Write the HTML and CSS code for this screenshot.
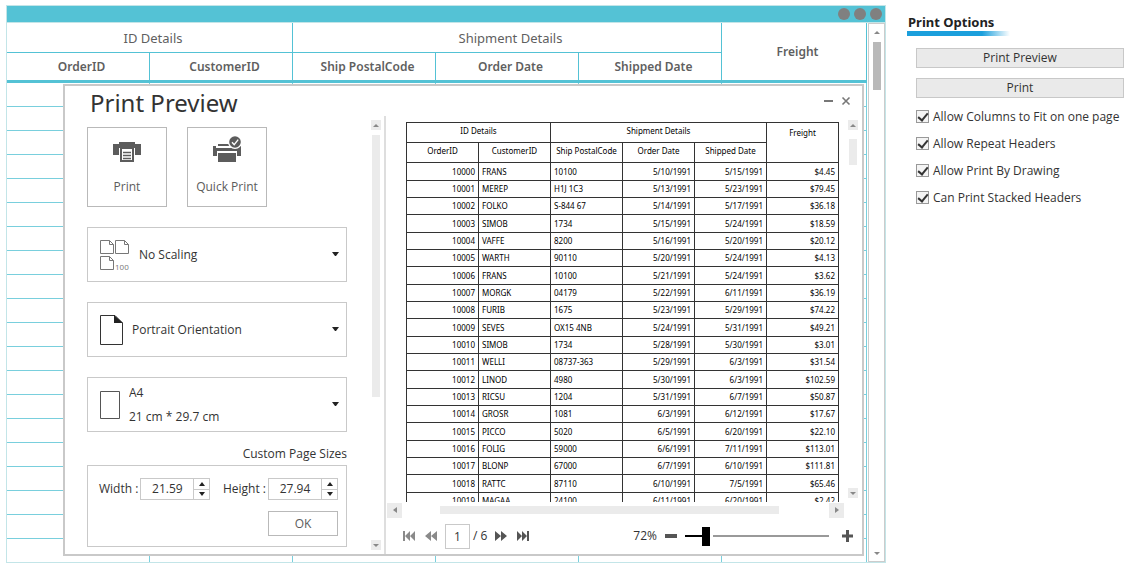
FILE: index.html
```html
<!DOCTYPE html>
<html lang="en">
<head>
<meta charset="utf-8">
<title>Print Preview</title>
<link rel="stylesheet" href="styles.css">
</head>
<body>
<div class="page">
  <main class="window">
    <div class="titlebar"><i class="dot"></i><i class="dot"></i><i class="dot"></i></div>
    <div class="window-body">
      <table class="grid">
        <colgroup><col span="5"><col class="col-freight"></colgroup>
        <thead>
          <tr><th colspan="2" class="stacked">ID Details</th><th colspan="3" class="stacked">Shipment Details</th><th rowspan="2">Freight</th></tr>
          <tr><th>OrderID</th><th>CustomerID</th><th>Ship PostalCode</th><th>Order Date</th><th>Shipped Date</th></tr>
        </thead>
        <tbody id="grid-rows"></tbody>
      </table>
      <div class="scroll scroll-main">
        <button class="scroll-btn" aria-label="Scroll up"><svg width="6" height="3" viewBox="0 0 6 3"><path d="M0 3L3 0L6 3Z"/></svg></button>
        <div class="scroll-thumb"></div>
        <button class="scroll-btn" aria-label="Scroll down"><svg width="6" height="3" viewBox="0 0 6 3"><path d="M0 0L3 3L6 0Z"/></svg></button>
      </div>
    </div>

    <section class="dialog" aria-labelledby="dialog-title">
      <header class="dialog-head">
        <h1 id="dialog-title">Print Preview</h1>
        <div class="dialog-actions">
          <button aria-label="Minimize"><svg width="9" height="10" viewBox="0 0 9 10"><path d="M0 5H9" stroke="#777" stroke-width="2"/></svg></button>
          <button aria-label="Close"><svg width="8" height="8" viewBox="0 0 8 8"><path d="M0.5 0.5L7.5 7.5M7.5 0.5L0.5 7.5" stroke="#777" stroke-width="1.6"/></svg></button>
        </div>
      </header>
      <div class="dialog-body">
        <div class="settings">
          <div class="settings-content">
            <div class="tiles">
              <button class="tile">
                <svg width="28" height="28" viewBox="0 0 28 28"><path fill="#5c5c5c" d="M0 4H6V2H22V4H28V15H0Z"/><path fill="#fff" d="M6 8H22V15H6Z"/><path fill="#5c5c5c" d="M7 8H21V22H7Z"/><path fill="#fff" d="M9 9H19V20H9Z"/><path d="M10 12.5H18M10 15.5H18M10 18.5H18" stroke="#5c5c5c" stroke-width="1.3"/></svg>
                <span>Print</span>
              </button>
              <button class="tile">
                <svg width="28" height="28" viewBox="0 0 28 28"><path fill="#5c5c5c" d="M5 4H18V6H5ZM0 6H3V8H25V6H28V16H24V11H4V16H0ZM5 13H23V22H5Z"/><circle cx="22" cy="2" r="7" fill="#fff"/><circle cx="22" cy="2" r="5.8" fill="#5c5c5c"/><path d="M19 2.2L21.2 4.6L25.2 -0.4" fill="none" stroke="#fff" stroke-width="1.4"/></svg>
                <span>Quick Print</span>
              </button>
            </div>
            <div class="combo">
              <svg class="combo-icon" width="30" height="32" viewBox="0 0 30 32" fill="none" stroke="#777"><path d="M0.5 1.5H9.5L13.5 5.5V14.5H0.5ZM9.5 1.5V5.5H13.5"/><path d="M15.5 1.5H24.5L28.5 5.5V14.5H15.5ZM24.5 1.5V5.5H28.5"/><path d="M0.5 17.5H9.5L13.5 21.5V30.5H0.5ZM9.5 17.5V21.5H13.5"/><text class="icon-text" x="15" y="31">100</text></svg>
              <select aria-label="Scaling"><option>No Scaling</option></select>
              <svg class="caret" width="7" height="5" viewBox="0 0 7 5"><path d="M0 0H7L4 4H3Z"/></svg>
            </div>
            <div class="combo">
              <svg class="combo-icon" width="23" height="32" viewBox="0 0 23 32"><path d="M0.5 1.5H15L22.5 9V30.5H0.5Z" fill="none" stroke="#333"/><path d="M14 1L23 9H14Z" fill="#222"/></svg>
              <select aria-label="Orientation"><option>Portrait Orientation</option></select>
              <svg class="caret" width="7" height="5" viewBox="0 0 7 5"><path d="M0 0H7L4 4H3Z"/></svg>
            </div>
            <div class="combo combo-paper">
              <svg class="combo-icon" width="20" height="28" viewBox="0 0 20 28"><path d="M0.5 0.5H19.5V27.5H0.5Z" fill="none" stroke="#555"/></svg>
              <div class="combo-lines"><select aria-label="Paper size"><option>A4</option></select><span>21 cm * 29.7 cm</span></div>
              <svg class="caret" width="7" height="5" viewBox="0 0 7 5"><path d="M0 0H7L4 4H3Z"/></svg>
            </div>
            <div class="custom-title">Custom Page Sizes</div>
            <div class="custom">
              <div class="custom-row">
                <label for="w">Width :</label>
                <div class="spin"><input id="w" type="text" value="21.59"><div class="spin-btns"><button aria-label="Increase width"><svg width="6" height="4" viewBox="0 0 6 4"><path d="M0 4L3 0L6 4Z"/></svg></button><button aria-label="Decrease width"><svg width="6" height="4" viewBox="0 0 6 4"><path d="M0 0L3 4L6 0Z"/></svg></button></div></div>
                <label for="h" class="push">Height :</label>
                <div class="spin"><input id="h" type="text" value="27.94"><div class="spin-btns"><button aria-label="Increase height"><svg width="6" height="4" viewBox="0 0 6 4"><path d="M0 4L3 0L6 4Z"/></svg></button><button aria-label="Decrease height"><svg width="6" height="4" viewBox="0 0 6 4"><path d="M0 0L3 4L6 0Z"/></svg></button></div></div>
              </div>
              <button class="ok">OK</button>
            </div>
          </div>
          <div class="scroll scroll-settings">
            <button class="scroll-btn" aria-label="Scroll up"><svg width="6" height="3" viewBox="0 0 6 3"><path d="M0 3L3 0L6 3Z"/></svg></button>
            <div class="scroll-thumb"></div>
            <button class="scroll-btn" aria-label="Scroll down"><svg width="6" height="3" viewBox="0 0 6 3"><path d="M0 0L3 3L6 0Z"/></svg></button>
          </div>
        </div>

        <div class="preview">
          <div class="preview-top">
            <div class="viewport">
              <table class="sheet">
                <thead>
                  <tr><th colspan="2">ID Details</th><th colspan="3">Shipment Details</th><th rowspan="2" class="tall">Freight</th></tr>
                  <tr><th>OrderID</th><th>CustomerID</th><th>Ship PostalCode</th><th>Order Date</th><th>Shipped Date</th></tr>
                </thead>
                <tbody id="sheet-rows"></tbody>
              </table>
            </div>
            <div class="scroll scroll-preview">
              <button class="scroll-btn" aria-label="Scroll up"><svg width="6" height="3" viewBox="0 0 6 3"><path d="M0 3L3 0L6 3Z"/></svg></button>
              <div class="scroll-thumb"></div>
              <button class="scroll-btn" aria-label="Scroll down"><svg width="6" height="3" viewBox="0 0 6 3"><path d="M0 0L3 3L6 0Z"/></svg></button>
            </div>
          </div>
          <div class="hscroll">
            <button aria-label="Scroll left"><svg width="4" height="6" viewBox="0 0 4 6"><path d="M4 0L0 3L4 6Z"/></svg></button>
            <div class="hscroll-thumb"></div>
            <button aria-label="Scroll right"><svg width="4" height="6" viewBox="0 0 4 6"><path d="M0 0L4 3L0 6Z"/></svg></button>
          </div>
          <div class="pager">
            <button class="off" aria-label="First page"><svg width="12" height="10" viewBox="0 0 12 10"><path d="M0 0H2V10H0ZM7 0V10L2 5ZM12 0V10L7 5Z"/></svg></button>
            <button class="off" aria-label="Previous page"><svg width="12" height="10" viewBox="0 0 12 10"><path d="M6 0V10L0 5ZM12 0V10L6 5Z"/></svg></button>
            <div class="page-no"><input type="text" value="1" aria-label="Page"><span>/ 6</span></div>
            <button aria-label="Next page"><svg width="12" height="10" viewBox="0 0 12 10"><path d="M0 0V10L6 5ZM6 0V10L12 5Z"/></svg></button>
            <button aria-label="Last page"><svg width="12" height="10" viewBox="0 0 12 10"><path d="M0 0V10L5 5ZM5 0V10L10 5ZM10 0H12V10H10Z"/></svg></button>
            <div class="zoom">
              <label for="zoom">72%</label>
              <button aria-label="Zoom out"><svg width="12" height="12" viewBox="0 0 12 12"><path d="M0 4H12V8H0Z"/></svg></button>
              <input id="zoom" type="range" min="0" max="200" value="25">
              <button class="plus" aria-label="Zoom in"><svg width="11" height="12" viewBox="0 0 11 12"><path d="M4 0H7V4.5H11V7.5H7V12H4V7.5H0V4.5H4Z"/></svg></button>
            </div>
          </div>
        </div>
      </div>
    </section>
  </main>

  <aside class="options">
    <h2>Print Options</h2>
    <div class="options-list">
      <button class="action">Print Preview</button>
      <button class="action">Print</button>
    </div>
    <div class="checks">
      <label class="check"><input type="checkbox" checked>Allow Columns to Fit on one page</label>
      <label class="check"><input type="checkbox" checked>Allow Repeat Headers</label>
      <label class="check"><input type="checkbox" checked>Allow Print By Drawing</label>
      <label class="check"><input type="checkbox" checked>Can Print Stacked Headers</label>
    </div>
  </aside>
</div>
<script src="app.js"></script>
</body>
</html>
```
FILE: styles.css
```css
* { box-sizing: border-box; }
body { margin: 0; background: #fff; color: #333; font-family: "Open Sans", "Noto Sans", sans-serif; font-size: 12px; line-height: 16px; }
button, input, select { font: inherit; color: inherit; margin: 0; }
button { padding: 0; border: 0; background: none; display: flex; align-items: center; justify-content: center; }
svg { display: block; flex: none; overflow: visible; }

.page { display: flex; gap: 21px; padding: 5px 7px 7px 6px; }

.window { flex: 1; min-width: 0; position: relative; border: 1px solid #c3e5e8; }
.titlebar { height: 17px; background: #54c2d5; border-bottom: 1px solid #c3e5e8; display: flex; justify-content: flex-end; align-items: center; gap: 4px; padding-right: 3px; }
.dot { width: 12px; height: 12px; border-radius: 50%; background: #808080; }
.window-body { display: flex; gap: 1px; }

.grid { flex: 1; border-collapse: separate; border-spacing: 0; table-layout: fixed; width: 100%; font-family: "Noto Sans", sans-serif; }
.col-freight { width: 145px; }
.grid th, .grid td { padding: 0; border-right: 1px solid #54c2d5; border-bottom: 1px solid #54c2d5; }
.grid td { height: 24px; border-color: #79cfdd; }
.grid tr:last-child td { height: 23px; border-bottom: 0; }
.grid th { height: 30px; padding-left: 7px; font-size: 12px; font-weight: 600; color: #5f5f5f; border-bottom-width: 3px; }
.grid th.stacked { font-size: 13px; font-weight: 400; border-bottom-width: 1px; }

.scroll { display: flex; flex-direction: column; align-items: center; }
.scroll-btn { width: 10px; height: 10px; fill: #888; background: #ebebeb; }
.scroll-btn:last-child { margin-top: auto; }
.scroll-thumb { width: 8px; background: #ebebeb; }
.scroll-main { width: 17px; border: 1px solid #ccc; padding: 3px 0; }
.scroll-main .scroll-btn { background: none; }
.scroll-main .scroll-thumb { height: 48px; margin-top: 5px; background: #b9b9b9; }

.dialog { position: absolute; left: 56px; right: 21px; top: 78px; background: #fff; border: 2px solid #c9c9c9; display: flex; flex-direction: column; }
.dialog-head { display: flex; justify-content: space-between; height: 30px; padding: 0 12px 0 25px; }
h1 { margin: 0; font-family: "Noto Sans", sans-serif; font-size: 24px; line-height: 34px; font-weight: 400; color: #333; }
.dialog-actions { display: flex; align-items: center; gap: 9px; }
.dialog-body { display: flex; }

.settings { width: 321px; flex: none; display: flex; justify-content: space-between; padding-right: 3px; border-right: 2px solid #dedede; }
.settings-content { width: 282px; padding: 11px 0 7px 22px; display: flex; flex-direction: column; }
.tiles { display: flex; gap: 20px; }
.tile { width: 80px; height: 80px; border: 1px solid #b9b9b9; flex-direction: column; justify-content: flex-start; gap: 11px; padding-top: 12px; color: #5c5c5c; }
.combo { height: 55px; margin-top: 20px; border: 1px solid #c9c9c9; display: flex; align-items: center; padding: 0 7px 0 12px; }
.combo select { appearance: none; border: 0; background: none; padding: 0; height: 16px; flex: 1; min-width: 0; margin-left: 9px; }
.combo-lines { flex: 1; margin-left: 9px; display: flex; flex-direction: column; gap: 8px; }
.combo-lines select { flex: none; margin-left: 0; }
.caret { fill: #222; }
.icon-text { font-size: 8px; fill: #777; stroke: none; }
.custom-title { margin-top: 14px; text-align: right; }
.custom { margin-top: 3px; height: 82px; border: 1px solid #c9c9c9; padding: 12px 8px 0 11px; }
.custom-row { display: flex; align-items: center; }
.push { margin-left: auto; }
.spin { width: 70px; height: 22px; margin-left: 2px; border: 1px solid #c9c9c9; display: flex; }
.spin input { width: 52px; border: 0; padding: 0; text-align: center; background: none; }
.spin-btns { flex: 1; border-left: 1px solid #c9c9c9; display: flex; flex-direction: column; }
.spin-btns button { flex: 1; fill: #222; }
.spin-btns button:first-child { border-bottom: 1px solid #c9c9c9; }
.ok { width: 70px; height: 25px; margin: 11px 0 0 auto; border: 1px solid #b9b9b9; color: #5c5c5c; }
.scroll-settings { padding: 4px 0; }
.scroll-settings .scroll-thumb { height: 262px; margin-top: 5px; }

.preview { flex: 1; min-width: 0; display: flex; flex-direction: column; }
.preview-top { flex: 1 1 0px; min-height: 0; display: flex; padding-right: 4px; }
.viewport { flex: 1; overflow: hidden; padding: 6px 9px 0 20px; }
.sheet { width: 100%; border-collapse: collapse; table-layout: fixed; font-family: "Noto Sans", sans-serif; font-size: 8px; line-height: 12px; color: #000; }
.sheet th, .sheet td { border: 1px solid #333; padding: 0 3px; white-space: nowrap; }
.sheet th { height: 20px; padding: 0 0 3px; font-weight: 400; }
.sheet th.tall { vertical-align: top; padding-top: 4px; }
.sheet td { height: 17px; text-align: right; }
.sheet tr:nth-child(3n+1) td { height: 18px; }
.sheet td.left { text-align: left; }
.scroll-preview { padding: 4px 0; }
.scroll-preview .scroll-thumb { height: 26px; margin-top: 9px; }
.hscroll { height: 16px; display: flex; align-items: center; padding: 0 18px 0 1px; }
.hscroll button { width: 15px; height: 15px; background: #ebebeb; fill: #888; }
.hscroll-thumb { flex: 1; height: 8px; margin: 0 50px 0 38px; background: #ebebeb; }
.pager { height: 36px; display: flex; align-items: center; gap: 10px; padding: 0 9px 0 17px; }
.pager button { fill: #555; }
.pager .off { fill: #8a8a8a; }
.page-no { display: flex; align-items: center; gap: 3px; margin: 0 -2px; }
.page-no input { width: 25px; height: 25px; border: 1px solid #c9c9c9; padding: 0; text-align: center; }
.zoom { margin-left: auto; display: flex; align-items: center; gap: 8px; }
.zoom .plus { margin-left: 5px; }
.zoom input { appearance: none; width: 144px; height: 20px; background: linear-gradient(to right, #000 17px, #fff 17px, #fff 28px, #999 28px) center / 100% 2px no-repeat; }
.zoom input::-webkit-slider-thumb { appearance: none; width: 8px; height: 19px; background: #000; }

.options { width: 217px; flex: none; }
h2 { margin: 0; padding: 7px 0 4px 1px; font-family: "Noto Sans", sans-serif; font-size: 13px; line-height: 20px; font-weight: 700; color: #222; background: linear-gradient(to right, #1b9fdc 75px, transparent 103px) left bottom / 100% 5px no-repeat; }
.options-list { padding: 12px 0 0 9px; display: flex; flex-direction: column; gap: 10px; }
.action { height: 20px; background: #eaeaea; border: 1px solid #c8c8c8; }
.checks { padding: 5px 0 0 9px; }
.check { height: 27px; display: flex; align-items: center; gap: 4px; white-space: nowrap; }
.check input { appearance: none; width: 13px; height: 13px; border: 1px solid #999; background: #f4f4f4; display: grid; place-items: center; }
.check input:checked::before { content: ""; width: 4px; height: 8px; margin-bottom: 2px; border: solid #333; border-width: 0 2px 2px 0; transform: rotate(40deg); }
```
FILE: app.js
```js
const orders = [
  ["10000", "FRANS", "10100", "5/10/1991", "5/15/1991", "$4.45"],
  ["10001", "MEREP", "H1J 1C3", "5/13/1991", "5/23/1991", "$79.45"],
  ["10002", "FOLKO", "S-844 67", "5/14/1991", "5/17/1991", "$36.18"],
  ["10003", "SIMOB", "1734", "5/15/1991", "5/24/1991", "$18.59"],
  ["10004", "VAFFE", "8200", "5/16/1991", "5/20/1991", "$20.12"],
  ["10005", "WARTH", "90110", "5/20/1991", "5/24/1991", "$4.13"],
  ["10006", "FRANS", "10100", "5/21/1991", "5/24/1991", "$3.62"],
  ["10007", "MORGK", "04179", "5/22/1991", "6/11/1991", "$36.19"],
  ["10008", "FURIB", "1675", "5/23/1991", "5/29/1991", "$74.22"],
  ["10009", "SEVES", "OX15 4NB", "5/24/1991", "5/31/1991", "$49.21"],
  ["10010", "SIMOB", "1734", "5/28/1991", "5/30/1991", "$3.01"],
  ["10011", "WELLI", "08737-363", "5/29/1991", "6/3/1991", "$31.54"],
  ["10012", "LINOD", "4980", "5/30/1991", "6/3/1991", "$102.59"],
  ["10013", "RICSU", "1204", "5/31/1991", "6/7/1991", "$50.87"],
  ["10014", "GROSR", "1081", "6/3/1991", "6/12/1991", "$17.67"],
  ["10015", "PICCO", "5020", "6/5/1991", "6/20/1991", "$22.10"],
  ["10016", "FOLIG", "59000", "6/6/1991", "7/11/1991", "$113.01"],
  ["10017", "BLONP", "67000", "6/7/1991", "6/10/1991", "$111.81"],
  ["10018", "RATTC", "87110", "6/10/1991", "7/5/1991", "$65.46"],
  ["10019", "MAGAA", "24100", "6/11/1991", "6/20/1991", "$2.42"]
];

document.getElementById("sheet-rows").innerHTML = orders
  .map(row => "<tr>" + row.map((v, i) => `<td${i === 1 || i === 2 ? ' class="left"' : ""}>${v}</td>`).join("") + "</tr>")
  .join("");

document.getElementById("grid-rows").innerHTML = orders
  .map(() => "<tr>" + "<td></td>".repeat(6) + "</tr>")
  .join("");
```
